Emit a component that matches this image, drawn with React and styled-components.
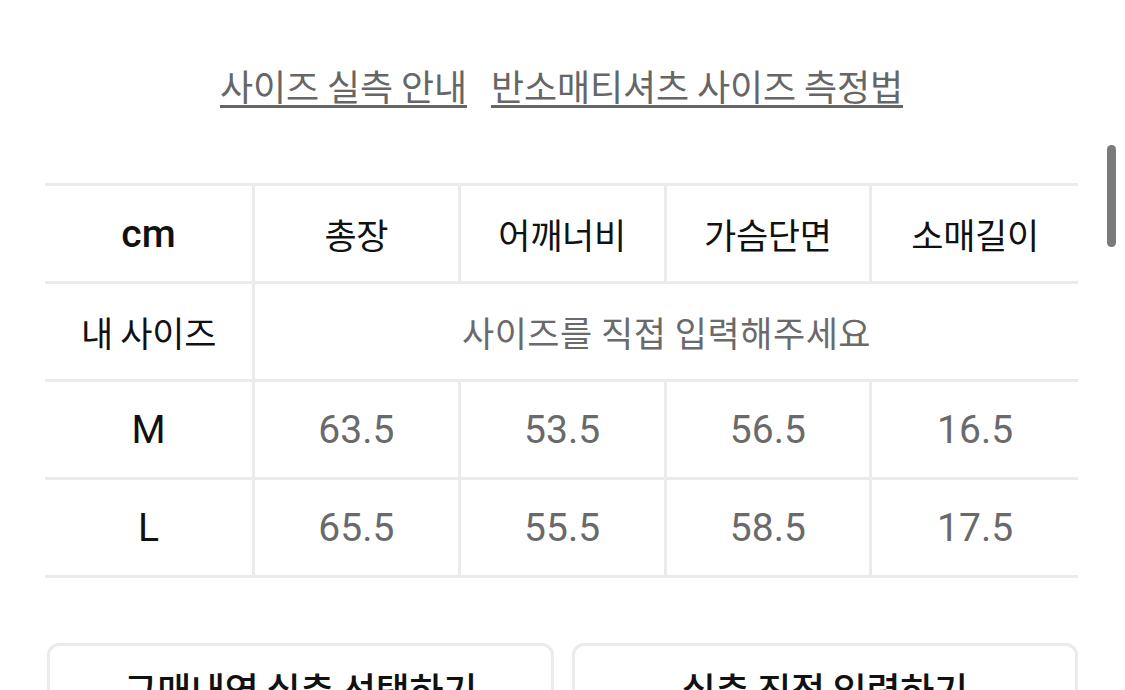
import React from 'react';
import styled, { createGlobalStyle } from 'styled-components';

const GlobalStyle = createGlobalStyle`
  html, body {
    margin: 0;
    padding: 0;
    background: #fff;
    overflow: hidden;
  }
  body {
    font-family: "Noto Sans CJK KR", "Noto Sans", sans-serif;
    color: #111;
  }
`;

const LINE = '#ebebeb';

// Whole page, padded like the mobile sheet
const Page = styled.div`
  position: relative;
  width: 1125px;
  height: 690px;
  padding: 0 47px 0 45px;
  box-sizing: border-box;
  overflow: hidden;
`;

// Guide links on top
const Links = styled.div`
  display: flex;
  justify-content: center;
  gap: 24px;
  padding-top: 65px;
  height: 183px;
  box-sizing: border-box;
`;

const GuideLink = styled.a`
  display: inline-block;
  height: 40px;
  line-height: 40px;
  font-size: 36px;
  letter-spacing: -0.1px;
  color: #666;
  border-bottom: 3px solid #666;
  text-decoration: none;
`;

// Size table
const Table = styled.div`
  display: grid;
  grid-template-columns: 210px repeat(4, 1fr);
  border-top: 3px solid ${LINE};
`;

const Cell = styled.div`
  height: 95px;
  display: flex;
  align-items: center;
  justify-content: center;
  border-bottom: 3px solid ${LINE};
  border-right: ${(props) => (props.last ? 'none' : `3px solid ${LINE}`)};
  grid-column: ${(props) => props.span || 'auto'};
  font-size: 35px;
  letter-spacing: ${(props) => (props.muted ? '0.5px' : '-0.3px')};
  font-weight: 400;
  color: ${(props) => (props.muted ? '#6a6a6a' : '#111')};
`;

const Latin = styled.span`
  font-family: Roboto, "Noto Sans", sans-serif;
  font-size: 39px;
  letter-spacing: 0;
  font-weight: ${(props) => (props.bold ? 500 : 400)};
`;

// Bottom action buttons
const Actions = styled.div`
  display: grid;
  grid-template-columns: 1fr 1fr;
  gap: 18px;
  margin-top: 65px;
  padding-left: 2px;
`;

const ActionButton = styled.button`
  height: 92px;
  border: 3px solid ${LINE};
  border-radius: 12px;
  background: #fff;
  font-family: "Noto Sans CJK KR", sans-serif;
  font-size: 37px;
  font-weight: 500;
  letter-spacing: -0.3px;
  color: #111;
  padding: 0;
`;

// Overlay scrollbar thumb
const ScrollThumb = styled.div`
  position: absolute;
  top: 145px;
  right: 9px;
  width: 9px;
  height: 102px;
  border-radius: 5px;
  background: #7a7a7a;
`;

const headers = ['총장', '어깨너비', '가슴단면', '소매길이'];
const rows = [
  { size: 'M', values: ['63.5', '53.5', '56.5', '16.5'] },
  { size: 'L', values: ['65.5', '55.5', '58.5', '17.5'] },
];

export default function App() {
  return (
    <>
      <GlobalStyle />
      <Page>
        <Links>
          <GuideLink>사이즈 실측 안내</GuideLink>
          <GuideLink>반소매티셔츠 사이즈 측정법</GuideLink>
        </Links>

        <Table>
          <Cell>
            <Latin bold>cm</Latin>
          </Cell>
          {headers.map((h, i) => (
            <Cell key={h} last={i === headers.length - 1}>
              {h}
            </Cell>
          ))}

          <Cell>내 사이즈</Cell>
          <Cell span="2 / span 4" muted last>
            사이즈를 직접 입력해주세요
          </Cell>

          {rows.map((row) => (
            <React.Fragment key={row.size}>
              <Cell>
                <Latin>{row.size}</Latin>
              </Cell>
              {row.values.map((v, i) => (
                <Cell key={i} muted last={i === row.values.length - 1}>
                  <Latin>{v}</Latin>
                </Cell>
              ))}
            </React.Fragment>
          ))}
        </Table>

        <Actions>
          <ActionButton>구매내역 실측 선택하기</ActionButton>
          <ActionButton>실측 직접 입력하기</ActionButton>
        </Actions>

        <ScrollThumb />
      </Page>
    </>
  );
}
